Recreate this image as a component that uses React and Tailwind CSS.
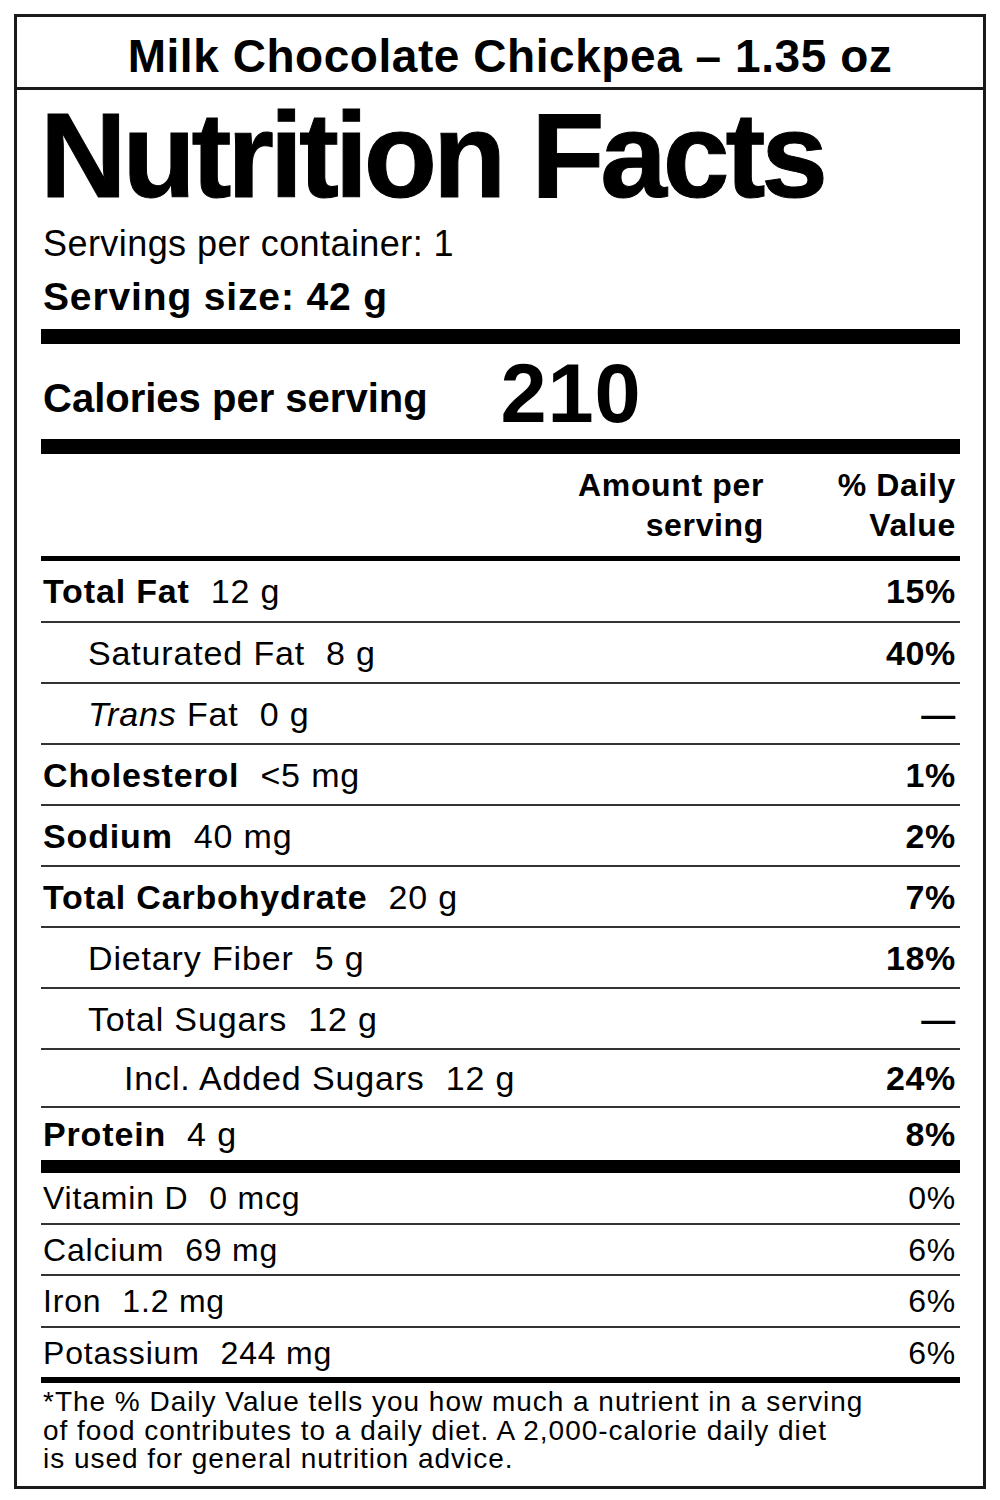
const nutrients = [
  { name: "Total Fat", amount: "12 g", dv: "15%", bold: true, indent: 0, h: "h-[62px]" },
  { name: "Saturated Fat", amount: "8 g", dv: "40%", indent: 1 },
  { name: "Trans Fat", italic: "Trans", amount: "0 g", dv: "—", indent: 1 },
  { name: "Cholesterol", amount: "<5 mg", dv: "1%", bold: true, indent: 0 },
  { name: "Sodium", amount: "40 mg", dv: "2%", bold: true, indent: 0 },
  { name: "Total Carbohydrate", amount: "20 g", dv: "7%", bold: true, indent: 0 },
  { name: "Dietary Fiber", amount: "5 g", dv: "18%", indent: 1 },
  { name: "Total Sugars", amount: "12 g", dv: "—", indent: 1 },
  { name: "Incl. Added Sugars", amount: "12 g", dv: "24%", indent: 2, h: "h-[58px]" },
  { name: "Protein", amount: "4 g", dv: "8%", bold: true, indent: 0, h: "h-[52px]", last: true },
]

const vitamins = [
  { name: "Vitamin D", amount: "0 mcg", dv: "0%", h: "h-[52px]" },
  { name: "Calcium", amount: "69 mg", dv: "6%", h: "h-[51px]" },
  { name: "Iron", amount: "1.2 mg", dv: "6%", h: "h-[52px]" },
  { name: "Potassium", amount: "244 mg", dv: "6%", h: "h-[49px]", last: true },
]

const indents = ["pl-[2px]", "pl-[47px]", "pl-[83px]"]

function NutrientRow({ item }) {
  return (
    <div
      className={`flex items-center justify-between pr-[4px] ${item.h || "h-[61px]"} ${indents[item.indent]} ${item.last ? "" : "border-b-2 border-[#333]"}`}
    >
      <div className="text-[34px] leading-none tracking-[0.025em] whitespace-nowrap">
        {item.italic ? (
          <span>
            <span className="italic">{item.italic}</span> Fat
          </span>
        ) : (
          <span className={item.bold ? "font-bold" : ""}>{item.name}</span>
        )}
        <span className="ml-[21px]">{item.amount}</span>
      </div>
      <div className="text-[34px] leading-none font-bold tracking-[0.02em]">{item.dv}</div>
    </div>
  )
}

function App() {
  return (
    <div className="w-[1000px] h-[1500px] bg-white p-[14px] text-black font-['Liberation_Sans',Arial,sans-serif]">
      <div className="h-[1475px] border-[3px] border-[#1a1a1a] flex flex-col">
        <div className="h-[73px] border-b-[3px] border-[#1a1a1a] pt-[16px] pl-[20px] text-center">
          <h2 className="text-[46px] leading-none font-bold tracking-[0.012em] whitespace-nowrap">
            Milk Chocolate Chickpea – 1.35 oz
          </h2>
        </div>

        <div className="pl-[24px] pr-[23px] flex flex-col">
          <h1 className="mt-[5px] -ml-[1px] text-[120px] leading-none font-bold tracking-[-0.035em] whitespace-nowrap [-webkit-text-stroke:1px_black]">
            Nutrition Facts
          </h1>
          <p className="mt-[11px] pl-[2px] text-[36px] leading-none tracking-[0.012em]">
            Servings per container: 1
          </p>
          <p className="mt-[15px] pl-[2px] text-[39px] leading-none font-bold tracking-[0.022em]">
            Serving size: 42 g
          </p>

          <div className="mt-[13px] h-[15px] bg-black" />

          <div className="h-[95px] flex items-end pl-[2px]">
            <span className="mb-[21px] text-[40px] leading-none font-bold whitespace-nowrap">
              Calories per serving
            </span>
            <span className="ml-[73px] mb-[4px] text-[83px] leading-none font-bold tracking-[0.01em]">210</span>
          </div>

          <div className="h-[15px] bg-black" />

          <div className="pt-[11px] pb-[11px] flex justify-end pr-[4px] text-[32px] leading-[40px] font-bold tracking-[0.02em]">
            <div className="text-right">
              Amount per
              <br />
              serving
            </div>
            <div className="w-[192px] text-right">
              % Daily
              <br />
              Value
            </div>
          </div>

          <div className="h-[5px] bg-black" />

          {nutrients.map((item) => (
            <NutrientRow key={item.name} item={item} />
          ))}

          <div className="h-[13px] bg-black" />

          {vitamins.map((v) => (
            <div
              key={v.name}
              className={`flex items-center justify-between pl-[2px] pr-[4px] ${v.h} ${v.last ? "" : "border-b-2 border-[#333]"} text-[32px] leading-none tracking-[0.025em]`}
            >
              <div className="whitespace-nowrap">
                <span>{v.name}</span>
                <span className="ml-[21px]">{v.amount}</span>
              </div>
              <div>{v.dv}</div>
            </div>
          ))}

          <div className="h-[6px] bg-black" />

          <p className="pt-[5px] pl-[2px] text-[28px] leading-[28.5px] tracking-[0.035em] whitespace-nowrap">
            *The % Daily Value tells you how much a nutrient in a serving
            <br />
            of food contributes to a daily diet. A 2,000-calorie daily diet
            <br />
            is used for general nutrition advice.
          </p>
        </div>
      </div>
    </div>
  )
}

export default App
